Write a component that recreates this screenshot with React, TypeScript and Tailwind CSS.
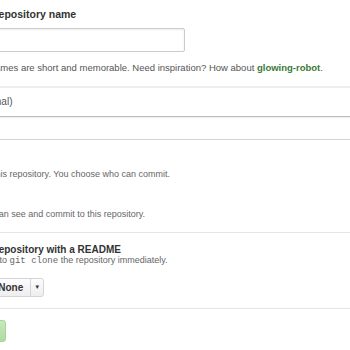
import { Lock, BookOpen } from "lucide-react";

export default function App() {
  return (
    <div className="h-[350px] w-[350px] overflow-hidden bg-white text-[#333]" style={{ fontFamily: '"Liberation Sans", Arial, sans-serif' }}>
      <div className="ml-[-81px] w-[600px] pt-[8px]">
        <div className="flex items-start">
          <div className="w-[73px] shrink-0">
            <div className="text-[10px] font-bold leading-[12px]">Owner</div>
          </div>
          <div className="flex flex-col">
            <label className="ml-[-1px] text-[10.5px] font-bold leading-[12px]">Repository name</label>
            <input className="mt-[8px] h-[24px] w-[193px] rounded-[2px] border border-[#ccc] bg-white px-2 text-[10px] shadow-[inset_0_1px_2px_rgba(0,0,0,0.08)] outline-none" />
          </div>
        </div>

        <p className="mt-[10px] text-[9.5px] leading-[12px] text-[#555]">
          Great repository names are short and memorable. Need inspiration? How about <strong className="text-[#3b7a35]">glowing-robot</strong>.
        </p>

        <div className="mt-[12px] h-[2px] w-full bg-[#eee]" />

        <label className="ml-[-6px] mt-[8px] block text-[10px] font-bold leading-[12px]">
          Description <span className="font-normal text-[#555]">(optional)</span>
        </label>
        <input className="mt-[8px] h-[24px] w-[520px] rounded-[2px] border border-[#d4d4d4] border-t-[#bbb] bg-white px-2 text-[10px] shadow-[inset_0_1px_2px_rgba(0,0,0,0.08)] outline-none" />

        <div className="ml-[7px] mt-[12px]">
          <div className="flex items-center gap-1 text-[10px] font-bold leading-[12px]">
            <BookOpen className="h-3 w-3" />Public
          </div>
          <p className="mt-[4px] text-[9px] leading-[12px] text-[#666]">Anyone can see this repository. You choose who can commit.</p>
          <div className="mt-[12px] flex items-center gap-1 text-[10px] font-bold leading-[12px]">
            <Lock className="h-3 w-3" />Private
          </div>
          <p className="mt-[4px] text-[9px] leading-[12px] text-[#666]">You choose who can see and commit to this repository.</p>
        </div>

        <div className="mt-[12px] h-px w-full bg-[#e5e5e5]" />

        <div className="ml-[6px] mt-[11px]">
          <div className="ml-[7px] text-[10px] font-bold leading-[11px]">Initialize this repository with a README</div>
          <p className="text-[9px] leading-[10px] text-[#666]">
            This will allow you to <code style={{ fontFamily: '"Liberation Mono", monospace' }}>git clone</code> the repository immediately.
          </p>
        </div>

        <div className="ml-[3px] mt-[12px] flex h-[19px] w-fit rounded-[3px] border border-[#d5d5d5] bg-gradient-to-b from-[#fcfcfc] to-[#eee] text-[10px] leading-[17px]">
          <div className="pl-[8px] pr-[7px]">Add .gitignore: <b>None</b></div>
          <div className="flex w-[13px] items-center justify-center border-l border-[#d5d5d5] text-[6px]">▼</div>
        </div>

        <div className="mt-[11px] h-px w-full bg-[#e5e5e5]" />

        <button className="ml-[-22px] mt-[11px] h-[22px] rounded-[3px] border border-[#a6d49a] bg-gradient-to-b from-[#c5e8bb] to-[#afdca3] px-[12px] text-[10px] font-bold text-white">Create repository</button>
      </div>
    </div>
  );
}
